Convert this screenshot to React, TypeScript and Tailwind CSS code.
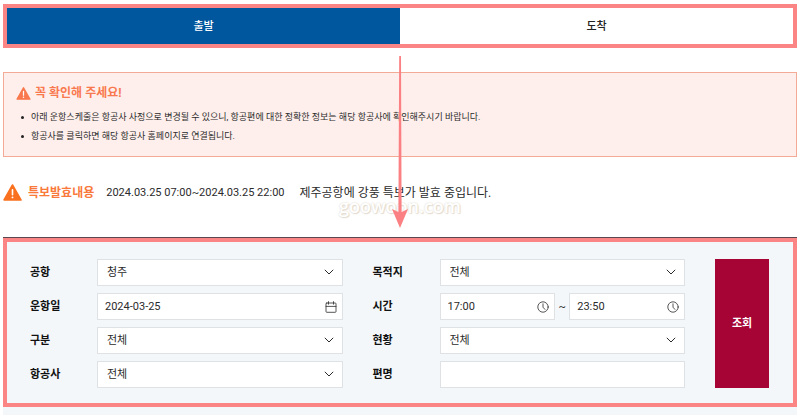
import { useState } from "react";
import type { ReactNode } from "react";
import clsx from "clsx";

const NOTICES = [
  "아래 운항스케줄은 항공사 사정으로 변경될 수 있으니, 항공편에 대한 정확한 정보는 해당 항공사에 확인해주시기 바랍니다.",
  "항공사를 클릭하면 해당 항공사 홈페이지로 연결됩니다.",
];

const TABS = ["출발", "도착"];

const WarningIcon = ({ className }: { className?: string }) => (
  <svg viewBox="0 0 20 18" className={className} aria-hidden="true">
    <path d="M10 1.2 18.8 16.8H1.2Z" fill="currentColor" stroke="currentColor" strokeWidth="2" strokeLinejoin="round" />
    <path d="M10 6.2v5.2" stroke="#fff" strokeWidth="1.7" strokeLinecap="round" />
    <circle cx="10" cy="14.2" r="1" fill="#fff" />
  </svg>
);

const ChevronIcon = ({ className }: { className?: string }) => (
  <svg viewBox="0 0 10 6" fill="none" stroke="currentColor" strokeWidth="1" className={className} aria-hidden="true">
    <path d="M0.8 0.8 5 5 9.2 0.8" />
  </svg>
);

const CalendarIcon = ({ className }: { className?: string }) => (
  <svg viewBox="0 0 12 12" fill="none" stroke="currentColor" strokeWidth="0.8" strokeLinecap="round" className={className} aria-hidden="true">
    <rect x="1" y="2" width="10" height="9.3" rx="0.8" />
    <path d="M1 5.4h10M3.5 0.6v2.6M8.5 0.6v2.6" />
  </svg>
);

const ClockIcon = ({ className }: { className?: string }) => (
  <svg viewBox="0 0 12 12" fill="none" stroke="currentColor" strokeWidth="0.8" strokeLinecap="round" className={className} aria-hidden="true">
    <circle cx="6" cy="6" r="5.2" />
    <path d="M6 2.8v3.4l1.9 2.2" />
  </svg>
);

function Field({ id, label, children }: { id: string; label: string; children: ReactNode }) {
  return (
    <div className="flex h-[27px] items-center">
      <label htmlFor={id} className="w-[67px] shrink-0 pt-px font-bold text-[#111]">
        {label}
      </label>
      {children}
    </div>
  );
}

function SelectBox({ id, value }: { id: string; value: string }) {
  return (
    <div className="relative h-full min-w-0 flex-1">
      <select id={id} className="h-full w-full appearance-none border border-[#dfe2e5] bg-white pl-[9px] pr-6">
        <option>{value}</option>
      </select>
      <ChevronIcon className="pointer-events-none absolute right-[9px] top-[10px] h-[6px] w-[10px]" />
    </div>
  );
}

function InputBox({ id, value, label, icon }: { id: string; value?: string; label?: string; icon?: ReactNode }) {
  return (
    <div className="flex h-full min-w-0 flex-1 items-center border border-[#dfe2e5] bg-white pr-[5px]">
      <input id={id} type="text" defaultValue={value} aria-label={label} className="h-full min-w-0 flex-1 bg-transparent pl-[7px] outline-none" />
      {icon}
    </div>
  );
}

export default function App() {
  const [tab, setTab] = useState(0);

  return (
    <main className="relative bg-white px-[3px] pt-1 font-[Roboto,'Noto_Sans_CJK_KR',sans-serif] text-[11px] leading-4 text-[#2b2b2b]">
      {/* Departure / arrival */}
      <div className="grid h-11 grid-cols-2 border-4 border-[#fb8585]">
        {TABS.map((name, i) => (
          <button
            key={name}
            type="button"
            onClick={() => setTab(i)}
            className={clsx("pt-px font-medium", tab === i ? "bg-[#00579d] text-white" : "bg-white text-[#222]")}
          >
            {name}
          </button>
        ))}
      </div>

      {/* Notice */}
      <section className="mt-6 border border-[#f3ab95] bg-[#feefec] px-3 py-3">
        <h2 className="flex items-center gap-1 text-[12px] font-bold leading-4 text-[#f9794f]">
          <WarningIcon className="h-[13px] w-[15px]" />
          꼭 확인해 주세요!
        </h2>
        <ul className="mt-2 flex flex-col gap-[3px] pl-[5px] text-[9px] leading-4">
          {NOTICES.map((text) => (
            <li key={text} className="flex items-center gap-[7px] whitespace-nowrap">
              <span className="h-[3px] w-[3px] rounded-full bg-[#222]" />
              {text}
            </li>
          ))}
        </ul>
      </section>

      {/* Weather alert */}
      <div className="mt-[26px] flex h-[18px] items-center">
        <WarningIcon className="h-[17px] w-[19px] text-[#f9711f]" />
        <strong className="ml-[6px] pt-px text-[12px] font-bold text-[#f9793a]">특보발효내용</strong>
        <span className="ml-3 pt-px">2024.03.25 07:00~2024.03.25 22:00</span>
        <span className="ml-[15px] pt-px text-[12px]">제주공항에 강풍 특보가 발효 중입니다.</span>
      </div>

      {/* Search */}
      <div className="mt-9 border-t border-[#59494e] bg-[#f4f7fa] pb-2">
        <form
          onSubmit={(e) => e.preventDefault()}
          className="flex gap-[30px] border-4 border-[#fb8585] pb-[15px] pl-[23px] pr-[24px] pt-[17px]"
        >
          <div className="grid flex-1 grid-cols-2 gap-x-[30px] gap-y-[7px]">
            <Field id="airport" label="공항">
              <SelectBox id="airport" value="청주" />
            </Field>
            <Field id="destination" label="목적지">
              <SelectBox id="destination" value="전체" />
            </Field>
            <Field id="date" label="운항일">
              <InputBox id="date" value="2024-03-25" icon={<CalendarIcon className="h-3 w-3 shrink-0" />} />
            </Field>
            <Field id="time-from" label="시간">
              <InputBox id="time-from" value="17:00" icon={<ClockIcon className="h-3 w-3 shrink-0" />} />
              <span className="w-[14px] text-center">~</span>
              <InputBox id="time-to" value="23:50" label="종료 시간" icon={<ClockIcon className="h-3 w-3 shrink-0" />} />
            </Field>
            <Field id="type" label="구분">
              <SelectBox id="type" value="전체" />
            </Field>
            <Field id="status" label="현황">
              <SelectBox id="status" value="전체" />
            </Field>
            <Field id="airline" label="항공사">
              <SelectBox id="airline" value="전체" />
            </Field>
            <Field id="flight" label="편명">
              <InputBox id="flight" />
            </Field>
          </div>
          <button type="submit" className="w-[54px] bg-[#a50435] font-bold text-white">
            조회
          </button>
        </form>
      </div>

      {/* Watermark and guide arrow */}
      <div className="pointer-events-none absolute inset-x-0 top-14 flex justify-center">
        <span className="absolute top-[138px] font-['Open_Sans',sans-serif] text-[18px] font-semibold leading-6 text-white [text-shadow:0_0_2px_#d9cfc2,1px_1px_1px_#e6dfd6]">
          goowoon.com
        </span>
        <svg width="16" height="172" viewBox="0 0 16 172" className="relative" aria-hidden="true">
          <path d="M7.2 0h1.8L9.6 156l6.4-3L8 172 0 153l6.4 3Z" fill="#fb8083" />
        </svg>
      </div>
    </main>
  );
}
